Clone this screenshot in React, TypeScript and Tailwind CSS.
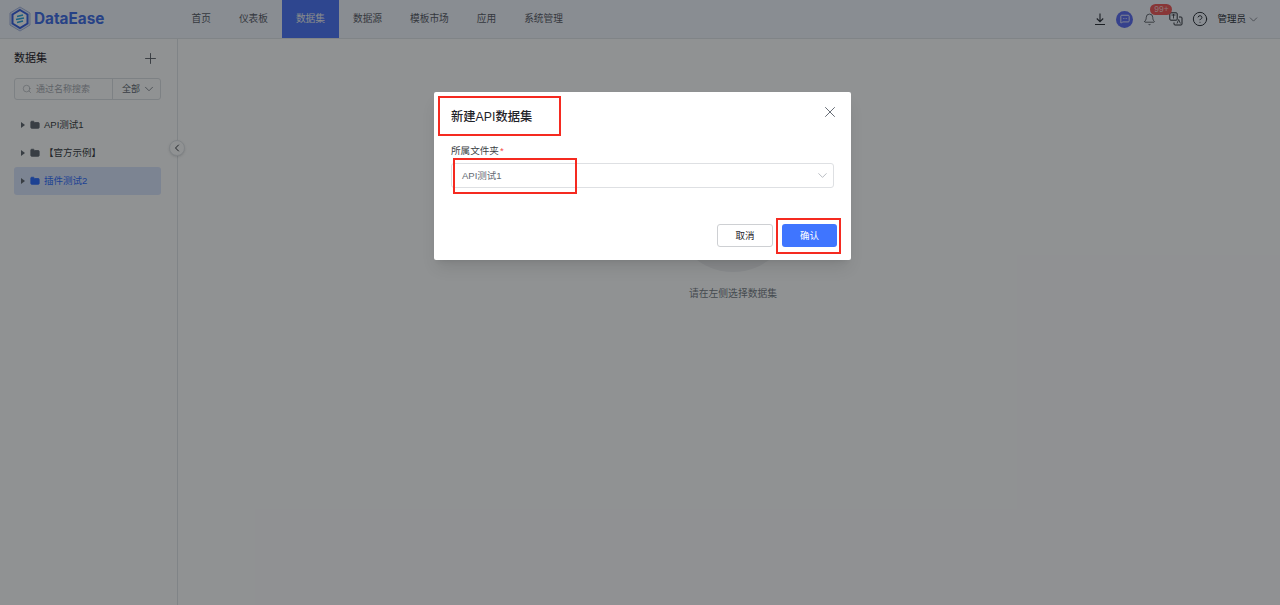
import { Bell, ChevronDown, ChevronLeft, CircleHelp, Folder, MessageSquareMore, Plus, Search, X } from 'lucide-react'

const navItems = ['首页', '仪表板', '数据集', '数据源', '模板市场', '应用', '系统管理']

const treeItems = [
  { name: 'API测试1', active: false },
  { name: '【官方示例】', active: false },
  { name: '插件测试2', active: true },
]

function Logo() {
  return (
    <div className="flex items-center gap-[3px]">
      <svg width="22" height="26" viewBox="0 0 22 26" fill="none">
        <path d="M11 1 L21 7 V19 L11 25 L1 19 V7 Z" fill="#dfe6f7" stroke="#a9b8e0" strokeWidth="1" />
        <path d="M11 4 L18.5 8.5 V17.5 L11 22 L3.5 17.5 V8.5 Z" fill="#fff" stroke="#3d65e0" strokeWidth="2" />
        <path d="M8 10.5 L14 9 M7 13.5 L15 12 M8 16.5 L14 15" stroke="#2fa7e0" strokeWidth="1.6" />
      </svg>
      <span className="text-[15.3px] font-bold text-[#4470e8] font-['Inter',sans-serif]">DataEase</span>
    </div>
  )
}

function DownloadIcon() {
  return (
    <svg width="14" height="14" viewBox="0 0 14 14" fill="none" stroke="currentColor" strokeWidth="1.1">
      <path d="M7 1.5 V9.5 M3.8 6.5 L7 9.7 L10.2 6.5 M2 12.5 H12" />
    </svg>
  )
}

function TranslateIcon() {
  return (
    <svg width="14" height="14" viewBox="0 0 14 14" fill="none" stroke="currentColor" strokeWidth="1">
      <rect x="0.8" y="0.8" width="7.4" height="7.4" rx="1" />
      <path d="M5 10.5 V12 A1 1 0 0 0 6 13 H12 A1 1 0 0 0 13 12 V6 A1 1 0 0 0 12 5 H10" />
      <path d="M2.5 3 H6.5 M4.5 2 V6.5" strokeWidth="0.8" />
      <path d="M8 11.5 L9.7 7.5 L11.4 11.5" strokeWidth="0.8" />
    </svg>
  )
}

function Header() {
  return (
    <header className="flex h-[39px] items-stretch bg-[#f3f6fe] border-b border-[#e3e6ea] pl-[9px] pr-[20px]">
      <div className="flex w-[168.5px] items-center">
        <Logo />
      </div>
      <nav className="flex items-stretch">
        {navItems.map(item => (
          <div
            key={item}
            className={`flex items-center px-[14px] text-[9.7px] leading-none ${item === '数据集' ? 'bg-[#5078f8] text-[#f0f0f0]' : 'text-[#5c6068]'}`}
          >
            {item}
          </div>
        ))}
      </nav>
      <div className="ml-auto flex items-center text-[#30343b]">
        <DownloadIcon />
        <div className="ml-[9px] flex h-[17px] w-[17px] items-center justify-center rounded-full bg-[#5f6ff2]">
          <MessageSquareMore size={10} color="#fff" strokeWidth={2} />
        </div>
        <div className="relative ml-[8px] flex w-[17px] justify-center">
          <Bell size={13} strokeWidth={1.3} />
          <span className="absolute left-[9px] top-[-9px] flex h-[11px] w-[22px] items-center justify-center rounded-full bg-[#f15b5b] text-[8.5px] leading-none text-[#f3d0d0]">99+</span>
        </div>
        <div className="ml-[11px]">
          <TranslateIcon />
        </div>
        <CircleHelp className="ml-[9px]" size={16} strokeWidth={1.5} />
        <span className="ml-[9px] text-[9.5px] text-[#30343b]">管理员</span>
        <ChevronDown className="ml-[1px] text-[#5c6068]" size={13} strokeWidth={1.3} />
      </div>
    </header>
  )
}

function Sidebar() {
  return (
    <aside className="relative w-[178px] shrink-0 border-r border-[#e3e6ea] bg-white pl-[14px] pr-[16px]">
      <div className="flex items-center justify-between pt-[11px] pr-[2px]">
        <span className="text-[11px] leading-[17px] text-[#1f2329]">数据集</span>
        <Plus size={17} strokeWidth={1.3} className="text-[#5c6068]" />
      </div>
      <div className="mt-[11px] flex h-[22px] rounded-[3px] border border-[#dde0e4] text-[9px]">
        <div className="flex w-[98px] items-center gap-[4px] border-r border-[#dde0e4] pl-[7px] text-[#a8abb2]">
          <Search size={10} strokeWidth={1.5} />
          <span className="pt-px">通过名称搜索</span>
        </div>
        <div className="flex flex-1 items-center gap-[2px] pl-[9px] text-[#646a73]">
          <span className="pt-px">全部</span>
          <ChevronDown size={14} strokeWidth={1.3} />
        </div>
      </div>
      <div className="mt-[11px] flex flex-col">
        {treeItems.map(item => (
          <div
            key={item.name}
            className={`flex h-[28px] items-center rounded-[3px] pl-[7px] text-[9.5px] ${item.active ? 'bg-[#dce6fd] text-[#3370ff]' : 'text-[#3b3f45]'}`}
          >
            <span className="h-0 w-0 border-y-[3px] border-l-[4px] border-y-transparent border-l-[#646a73]" />
            <Folder
              className={`ml-[5px] ${item.active ? 'text-[#3370ff]' : 'text-[#646a73]'}`}
              size={10}
              fill="currentColor"
            />
            <span className="ml-[4px] pt-px">{item.name}</span>
          </div>
        ))}
      </div>
      <div className="absolute right-[-8px] top-[101px] flex h-[16px] w-[16px] items-center justify-center rounded-full border border-[#e3e6ea] bg-white shadow-sm">
        <ChevronLeft size={12} className="text-[#1f2329]" strokeWidth={1.8} />
      </div>
    </aside>
  )
}

function EmptyState() {
  return (
    <main className="flex flex-1 flex-col items-center bg-white pl-[8px] pt-[113px]">
      <div className="h-[120px] w-[120px] rounded-full bg-[#f0f1f3]" />
      <p className="mt-[14px] text-[9.8px] leading-[15px] text-[#7a7f87]">请在左侧选择数据集</p>
    </main>
  )
}

function Dialog() {
  return (
    <div className="relative flex h-[168px] w-[417px] flex-col rounded-[2px] bg-white px-[17px] shadow-lg">
      <div className="mt-[15px] flex h-[20px] items-center justify-between">
        <h2 className="text-[12.3px] font-medium leading-[20px] text-[#1f2329]">新建API数据集</h2>
        <X size={18} strokeWidth={1.3} className="-mt-[10px] -mr-[5px] text-[#646a73]" />
      </div>
      <label className="mt-[16px] text-[9.6px] leading-[15px] text-[#3b3f45]">
        所属文件夹<span className="ml-[1px] text-[#f54a45]">*</span>
      </label>
      <div className="mt-[5px] flex h-[25px] items-center justify-between rounded-[3px] border border-[#dee0e3] pl-[10px] pr-[3px] text-[9.5px] text-[#646a73]">
        <span className="pt-px">API测试1</span>
        <ChevronDown size={15} strokeWidth={1} className="text-[#8f959e]" />
      </div>
      <div className="mt-[36px] -mr-[3px] flex justify-end gap-[9px]">
        <button className="h-[23px] w-[56px] rounded-[3px] border border-[#ced0d3] bg-white pt-px text-[9.5px] text-[#1f2329]">取消</button>
        <button className="h-[23px] w-[55px] rounded-[3px] bg-[#3f75ff] pt-px text-[9.5px] text-white">确认</button>
      </div>
      <div className="absolute left-[4px] top-[4px] h-[40px] w-[123px] border-2 border-[#f52a20]" />
      <div className="absolute left-[19px] top-[66px] h-[36px] w-[124px] border-2 border-[#f52a20]" />
      <div className="absolute left-[342px] top-[126px] h-[36px] w-[65px] border-2 border-[#f52a20]" />
    </div>
  )
}

export default function App() {
  return (
    <div className="relative flex h-[605px] w-[1280px] flex-col overflow-hidden bg-white font-['Liberation_Sans','Noto_Sans_CJK_SC',sans-serif]">
      <Header />
      <div className="flex flex-1">
        <Sidebar />
        <EmptyState />
      </div>
      <div className="absolute inset-0 flex items-start justify-center bg-[#03060a]/[.44] pt-[92px] pl-[5px]">
        <Dialog />
      </div>
    </div>
  )
}
